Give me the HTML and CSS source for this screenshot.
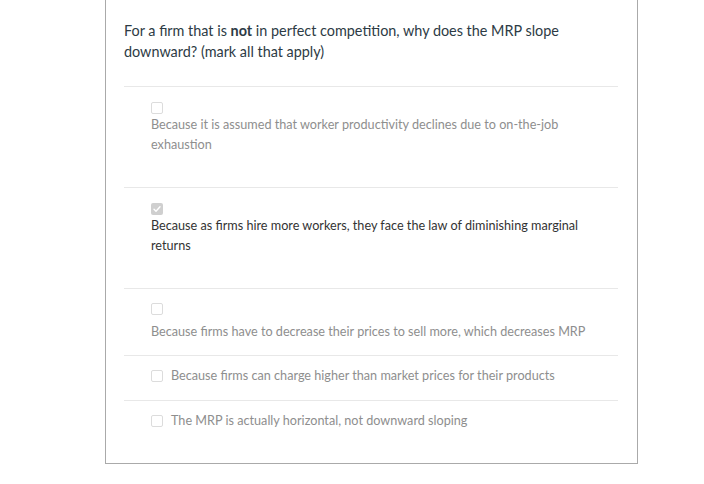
FILE: index.html
```html
<!DOCTYPE html>
<html>
<head>
<meta charset="utf-8">
<link rel="stylesheet" href="styles.css">
</head>
<body>
<div class="card">
  <div class="question">For a firm that is <strong>not</strong> in perfect competition, why does the MRP slope downward? (mark all that apply)</div>
  <div class="option stacked">
    <span class="box"></span>
    <div class="label muted">Because it is assumed that worker productivity declines due to on-the-job exhaustion</div>
  </div>
  <div class="option stacked">
    <span class="box checked"><svg viewBox="0 0 12 12" width="12" height="12"><path d="M3 6.3 L5 8.3 L9 3.8" fill="none" stroke="#fff" stroke-width="1.4" stroke-linecap="round" stroke-linejoin="round"/></svg></span>
    <div class="label">Because as firms hire more workers, they face the law of diminishing marginal returns</div>
  </div>
  <div class="option stacked loose">
    <span class="box"></span>
    <div class="label muted">Because firms have to decrease their prices to sell more, which decreases MRP</div>
  </div>
  <div class="option inline">
    <span class="box"></span>
    <div class="label muted">Because firms can charge higher than market prices for their products</div>
  </div>
  <div class="option inline last">
    <span class="box"></span>
    <div class="label muted">The MRP is actually horizontal, not downward sloping</div>
  </div>
</div>
</body>
</html>
```

FILE: styles.css
```css
html, body {
  margin: 0;
  padding: 0;
  background: #fff;
}
body {
  font-family: Lato, "Open Sans", sans-serif;
}
.card {
  margin-left: 105px;
  width: 494px;
  border: 1px solid #aaaaaa;
  border-top: none;
  padding: 20px 19px 0 18px;
}
.question {
  font-size: 14.4px;
  line-height: 21px;
  color: #2d3b45;
  margin-bottom: 24px;
}
.question strong {
  font-weight: 700;
}
.option {
  border-top: 1px solid #e8e8e8;
  padding-left: 27px;
  font-size: 12.65px;
  line-height: 20px;
  color: #333333;
}
.option .label {
  padding-right: 4px;
}
.option.stacked {
  padding-top: 15px;
  padding-bottom: 32px;
}
.option.stacked .box {
  display: block;
  margin-bottom: 1px;
}
.option.loose {
  padding-top: 14px;
  padding-bottom: 13px;
}
.option.loose .box {
  margin-bottom: 7px;
}
.option.inline {
  display: flex;
  align-items: center;
  gap: 8px;
  padding-top: 10px;
  padding-bottom: 14px;
}
.option.last {
  padding-bottom: 32px;
}
.box {
  width: 10px;
  height: 10px;
  border: 1px solid #dcdcdc;
  border-radius: 2px;
  background: #fff;
  flex: none;
}
.box.checked {
  width: 12px;
  height: 12px;
  border: none;
  background: #cfcfcf;
}
.box.checked svg {
  display: block;
}
.label.muted {
  color: #8e8e8e;
}
```
